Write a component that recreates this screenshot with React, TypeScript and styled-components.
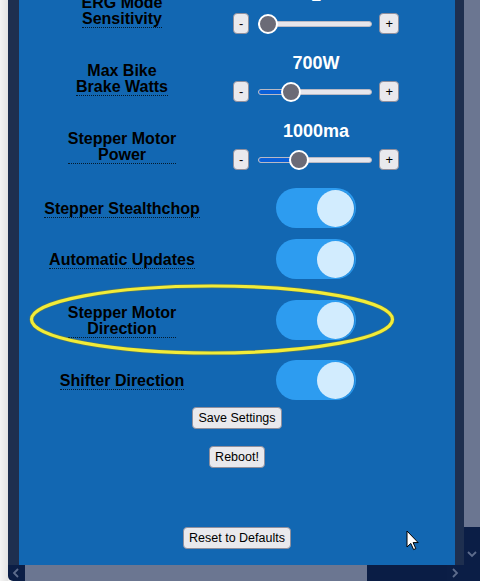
import React from "react";
import styled, { createGlobalStyle } from "styled-components";

const Global = createGlobalStyle`
  html, body { margin: 0; padding: 0; background: #efefef; overflow: hidden; }
  * { box-sizing: border-box; }
`;

const Frame = styled.div`
  position: relative;
  width: 480px;
  height: 581px;
  display: flex;
  flex-direction: column;
  overflow: hidden;
  background: #efefef;
`;

const TopArea = styled.div`
  display: flex;
  height: 565px;
`;

const LeftEdge = styled.div`
  width: 8px;
  flex: none;
  background: linear-gradient(to right, #f4f4f4, #e4e4e4);
`;

const Viewport = styled.div`
  flex: 1;
  background: #1e2f4f;
  padding: 0 9px 0 11px;
  overflow: hidden;
`;

const Panel = styled.div`
  background: #1267b2;
  margin-top: -31px;
  padding: 16px 0 0 6px;
  height: 640px;
  display: flex;
  flex-direction: column;
`;

const Row = styled.div<{ $mt: number }>`
  display: grid;
  grid-template-columns: 194px 194px;
  align-items: center;
  justify-items: center;
  margin-top: ${(p) => p.$mt}px;
`;

const Label = styled.span`
  display: inline-block;
  padding-top: 3px;
  font: bold 16px/16px "Liberation Sans", Arial, sans-serif;
  color: #000;
  text-align: center;
  border-bottom: 1px dotted rgba(0, 0, 0, 0.75);
`;

const SliderControl = styled.div`
  display: flex;
  flex-direction: column;
  align-items: center;
`;

const Value = styled.span`
  font: bold 18px/21px "Liberation Sans", Arial, sans-serif;
  color: #fff;
`;

const SliderLine = styled.div`
  display: flex;
  align-items: center;
  margin-top: 7px;
`;

const StepButton = styled.button`
  height: 21px;
  padding: 0 5px;
  margin: 0;
  border: 1px solid #8f8f9d;
  border-radius: 4px;
  background: #e9e9ed;
  color: #000;
  font: 13px/19px "Liberation Sans", Arial, sans-serif;
`;

const Track = styled.div`
  position: relative;
  width: 114px;
  height: 20px;
  margin: 0 7px 0 9px;
  display: flex;
  align-items: center;
`;

const Rail = styled.div`
  width: 100%;
  height: 6px;
  border-radius: 3px;
  background: #e6e6ec;
  border: 1px solid #b9b9c4;
  overflow: hidden;
`;

const Fill = styled.div`
  height: 100%;
  background: #0b60d8;
`;

const Thumb = styled.div`
  position: absolute;
  top: 0;
  width: 20px;
  height: 20px;
  border-radius: 50%;
  background: #6b6b77;
  border: 2px solid #fff;
`;

const Toggle = styled.div`
  width: 80px;
  height: 40px;
  border-radius: 20px;
  background: #2d9cf0;
  display: flex;
  align-items: center;
  justify-content: flex-end;
  padding-right: 2px;
`;

const Knob = styled.div`
  width: 37px;
  height: 37px;
  border-radius: 50%;
  background: #d2ecfe;
  box-shadow: 1px 0 0 #1f86d6;
`;

const ButtonStack = styled.div`
  display: flex;
  flex-direction: column;
  align-items: center;
  padding-right: 6px;
`;

const ActionButton = styled.button<{ $mt: number }>`
  margin-top: ${(p) => p.$mt}px;
  height: 22px;
  padding: 0 5px;
  border: 1px solid #8f8f9d;
  border-radius: 4px;
  background: #e9e9ed;
  color: #000;
  font: 12.5px/20px "Liberation Sans", Arial, sans-serif;
`;

const VScroll = styled.div`
  width: 16px;
  flex: none;
  display: flex;
  flex-direction: column;
`;

const VTrack = styled.div`
  flex: 1;
  background: #6b7691;
`;

const VThumb = styled.div`
  height: 18px;
  background: #0b1e46;
`;

const ScrollButton = styled.div<{ $w: number; $h: number }>`
  width: ${(p) => p.$w}px;
  height: ${(p) => p.$h}px;
  flex: none;
  background: #0b1e46;
  display: flex;
  align-items: center;
  justify-content: center;
`;

const BottomArea = styled.div`
  display: flex;
  height: 16px;
`;

const HScroll = styled.div`
  flex: 1;
  display: flex;
  border-bottom-left-radius: 5px;
  overflow: hidden;
`;

const HTrack = styled.div`
  width: 342px;
  background: #6b7691;
`;

const HThumb = styled.div`
  flex: 1;
  background: #0a1d45;
`;

const Corner = styled.div`
  width: 16px;
  background: #0b1e46;
`;

const Annotation = styled.svg`
  position: absolute;
  left: 29px;
  top: 283px;
`;

const Cursor = styled.svg`
  position: absolute;
  left: 406px;
  top: 530px;
`;

function Chevron({ dir }: { dir: "left" | "right" | "down" }) {
  const d =
    dir === "left"
      ? "M6 1 L2 5 L6 9"
      : dir === "right"
      ? "M2 1 L6 5 L2 9"
      : "M1 2 L5 6 L9 2";
  return (
    <svg width="10" height="10" viewBox="0 0 10 10">
      <path d={d} fill="none" stroke="#5d6c8c" strokeWidth="1.8" />
    </svg>
  );
}

function Slider({ value, pos }: { value: string; pos: number }) {
  return (
    <SliderControl>
      <Value>{value}</Value>
      <SliderLine>
        <StepButton>-</StepButton>
        <Track>
          <Rail>
            <Fill style={{ width: `calc(${pos} * (100% - 20px) + 8px)` }} />
          </Rail>
          <Thumb style={{ left: `calc(${pos} * (100% - 20px))` }} />
        </Track>
        <StepButton>+</StepButton>
      </SliderLine>
    </SliderControl>
  );
}

function Switch() {
  return (
    <Toggle>
      <Knob />
    </Toggle>
  );
}

export default function App() {
  return (
    <Frame>
      <Global />
      <TopArea>
        <LeftEdge />
        <Viewport>
          <Panel>
            <Row $mt={0}>
              <Label>
                ERG Mode
                <br />
                Sensitivity
              </Label>
              <Slider value="1" pos={0.0} />
            </Row>
            <Row $mt={19}>
              <Label>
                Max Bike
                <br />
                Brake Watts
              </Label>
              <Slider value="700W" pos={0.237} />
            </Row>
            <Row $mt={19}>
              <Label>
                Stepper Motor
                <br />
                Power
              </Label>
              <Slider value="1000ma" pos={0.328} />
            </Row>
            <Row $mt={18}>
              <Label>Stepper Stealthchop</Label>
              <Switch />
            </Row>
            <Row $mt={11}>
              <Label>Automatic Updates</Label>
              <Switch />
            </Row>
            <Row $mt={21}>
              <Label>
                Stepper Motor
                <br />
                Direction
              </Label>
              <Switch />
            </Row>
            <Row $mt={20}>
              <Label>Shifter Direction</Label>
              <Switch />
            </Row>
            <ButtonStack>
              <ActionButton $mt={7}>Save Settings</ActionButton>
              <ActionButton $mt={17}>Reboot!</ActionButton>
              <ActionButton $mt={59}>Reset to Defaults</ActionButton>
            </ButtonStack>
          </Panel>
        </Viewport>
        <VScroll>
          <VTrack />
          <VThumb />
          <ScrollButton $w={16} $h={20}>
            <Chevron dir="down" />
          </ScrollButton>
        </VScroll>
      </TopArea>
      <BottomArea>
        <LeftEdge />
        <HScroll>
          <ScrollButton $w={17} $h={16}>
            <Chevron dir="left" />
          </ScrollButton>
          <HTrack />
          <HThumb />
          <ScrollButton $w={17} $h={16}>
            <Chevron dir="right" />
          </ScrollButton>
          <Corner />
        </HScroll>
      </BottomArea>
      <Annotation width="366" height="73" viewBox="0 0 366 73">
        <ellipse cx="183" cy="36.5" rx="180.5" ry="33.5" fill="none" stroke="#8c8620" strokeWidth="4.5" opacity="0.5" />
        <ellipse cx="183" cy="36.5" rx="180.5" ry="33.5" fill="none" stroke="#f2ec38" strokeWidth="3.2" />
      </Annotation>
      <Cursor width="14" height="22" viewBox="0 0 14 22">
        <path
          d="M1 1 L1 17 L4.8 13.4 L7.6 19.6 L9.8 18.6 L7.1 12.6 L12.2 12.6 Z"
          fill="#fff"
          stroke="#000"
          strokeWidth="1"
          strokeLinejoin="round"
        />
      </Cursor>
    </Frame>
  );
}
